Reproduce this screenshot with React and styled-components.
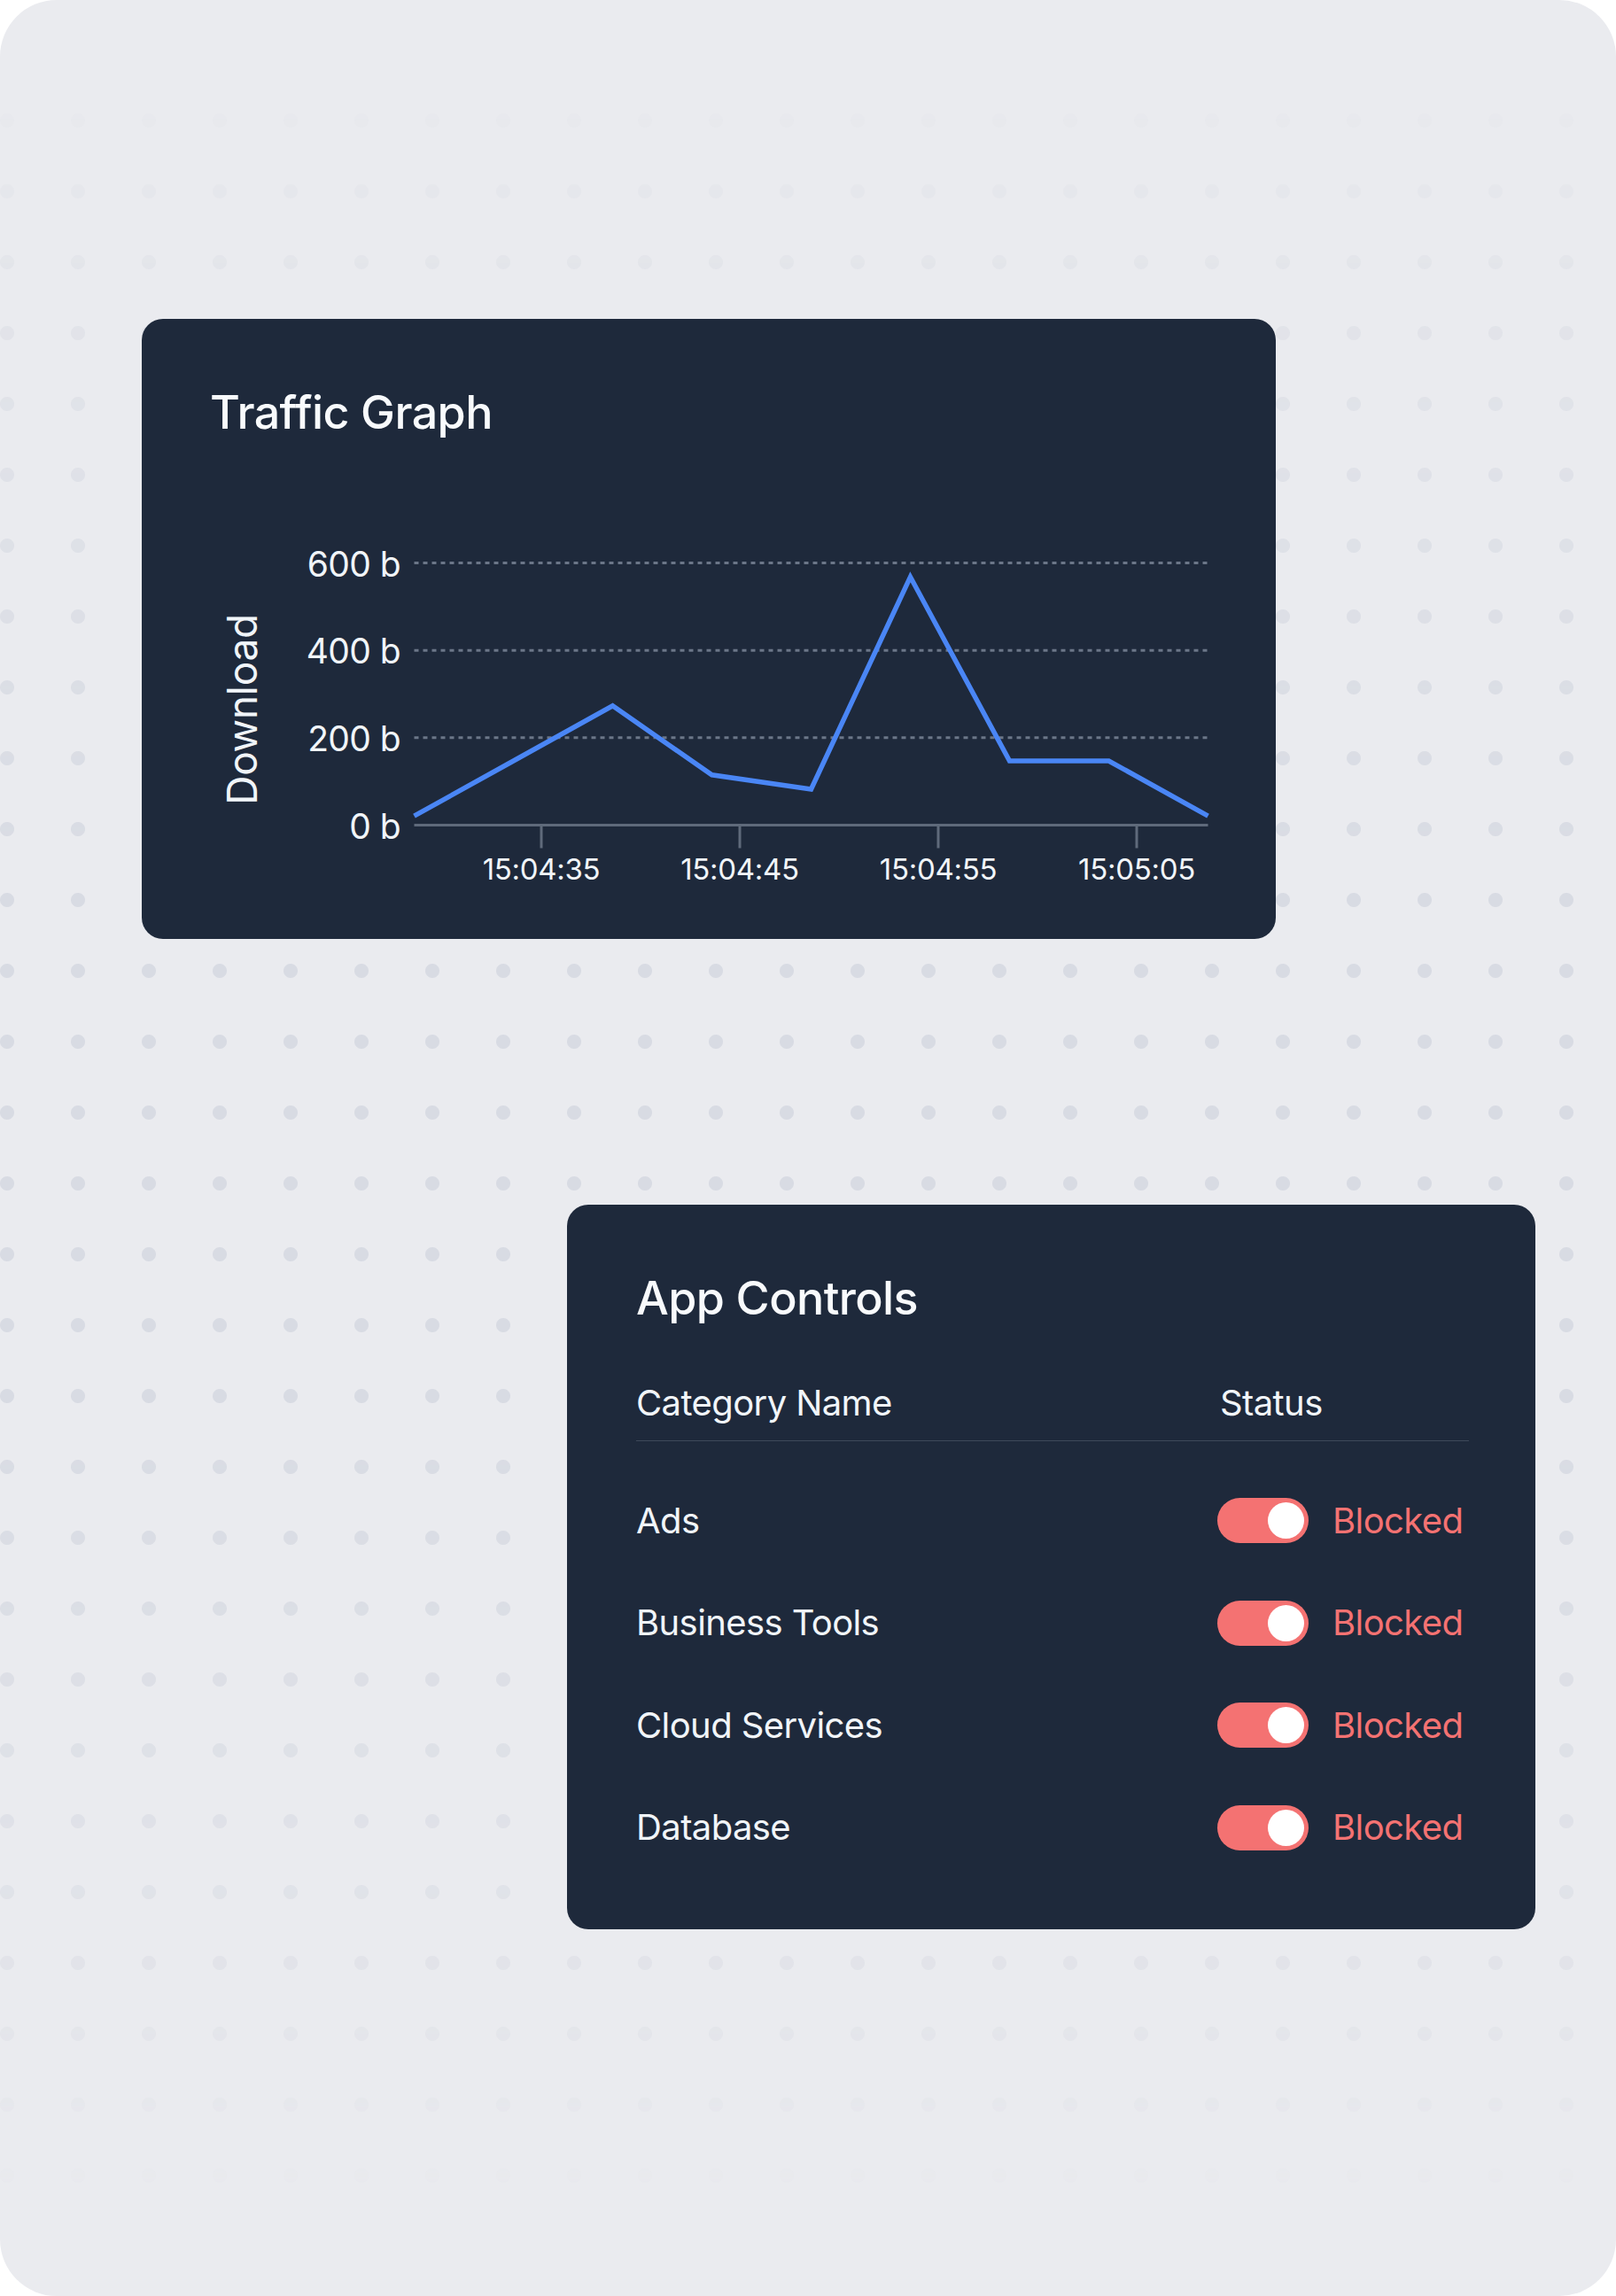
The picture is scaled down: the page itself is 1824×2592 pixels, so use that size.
import React from "react";
import styled, { createGlobalStyle } from "styled-components";

const GlobalStyle = createGlobalStyle`
  html, body {
    margin: 0;
    padding: 0;
    background: #ffffff;
  }
  body {
    font-family: Inter, "Noto Sans", sans-serif;
    -webkit-font-smoothing: antialiased;
  }
`;

const Panel = styled.div`
  position: relative;
  width: 1824px;
  height: 2592px;
  box-sizing: border-box;
  padding: 360px 0 0 160px;
  border-radius: 64px;
  background: #eaebef;
  overflow: hidden;
  display: flex;
  flex-direction: column;
  align-items: flex-start;

  &::before {
    content: "";
    position: absolute;
    inset: 0;
    background-image: radial-gradient(circle, #d8dbe3 7.5px, transparent 8.5px);
    background-size: 80px 80px;
    background-position: -32px 16px;
    -webkit-mask-image: linear-gradient(
      to bottom,
      transparent 3%,
      rgba(0, 0, 0, 0.45) 14%,
      #000 38%,
      #000 62%,
      rgba(0, 0, 0, 0.45) 86%,
      transparent 96%
    );
    mask-image: linear-gradient(
      to bottom,
      transparent 3%,
      rgba(0, 0, 0, 0.45) 14%,
      #000 38%,
      #000 62%,
      rgba(0, 0, 0, 0.45) 86%,
      transparent 96%
    );
  }
`;

const Card = styled.section`
  position: relative;
  box-sizing: border-box;
  width: ${p => p.$width}px;
  height: ${p => p.$height}px;
  margin: ${p => p.$margin || "0"};
  padding: ${p => p.$padding};
  background: #1e293b;
  border-radius: 24px;
  color: #f8fafc;
`;

const Title = styled.h2`
  margin: 0;
  font-size: 52px;
  line-height: 52px;
  font-weight: 500;
  letter-spacing: -0.6px;
  color: #f8fafc;
`;

const ChartSvg = styled.svg`
  display: block;
  margin-top: 108px;
  overflow: visible;

  text {
    font-family: Inter, "Noto Sans", sans-serif;
    fill: #f1f5f9;
  }
`;

const TableHead = styled.div`
  display: grid;
  grid-template-columns: 1fr 284px;
  margin-top: 72px;
  padding-bottom: 22px;
  border-bottom: 1.5px solid #3e495a;
  font-size: 40px;
  line-height: 40px;
  color: #f1f5f9;
  letter-spacing: -0.6px;
`;

const HeadCell = styled.div`
  padding-left: ${p => (p.$status ? "3px" : "0")};
`;

const Rows = styled.div`
  padding-top: 32px;
`;

const Row = styled.div`
  display: grid;
  grid-template-columns: 1fr 284px;
  align-items: center;
  height: 115.5px;
  font-size: 40px;
  line-height: 40px;
  color: #f1f5f9;
  letter-spacing: -0.6px;
`;

const StatusCell = styled.div`
  display: flex;
  align-items: center;
  gap: 27px;
`;

const Toggle = styled.span`
  box-sizing: border-box;
  display: flex;
  justify-content: ${p => (p.$on ? "flex-end" : "flex-start")};
  align-items: center;
  width: 103px;
  height: 51px;
  padding: 5px;
  border-radius: 26px;
  background: ${p => (p.$on ? "#f47272" : "#475569")};
`;

const Knob = styled.span`
  width: 41px;
  height: 41px;
  border-radius: 50%;
  background: #ffffff;
`;

const StatusText = styled.span`
  color: #f47272;
`;

// chart geometry (svg-local px)
const PLOT_LEFT = 230.5;
const PLOT_RIGHT = 1126.5;
const AXIS_Y = 331.5;
const PX_PER_BYTE = 296 / 600;
const STEP = 112;

const download = [21, 147, 273, 115, 82, 568, 147, 147, 21];
const yTicks = [600, 400, 200, 0];
const xTicks = [
  { x: 374, label: "15:04:35" },
  { x: 598, label: "15:04:45" },
  { x: 822, label: "15:04:55" },
  { x: 1046, label: "15:05:05" },
];

const yFor = v => AXIS_Y - v * PX_PER_BYTE;

function TrafficChart() {
  const line = download
    .map((v, i) => `${PLOT_LEFT + i * STEP},${yFor(v).toFixed(1)}`)
    .join(" ");

  return (
    <ChartSvg width="1140" height="410" viewBox="0 0 1140 410">
      <text
        transform="translate(53 201) rotate(-90)"
        textAnchor="middle"
        fontSize="46"
        letterSpacing="-0.3"
      >
        Download
      </text>

      {yTicks.map(v => (
        <g key={v}>
          <text x="215" y={yFor(v) + 15} textAnchor="end" fontSize="39" letterSpacing="-0.6">
            {v} b
          </text>
          {v > 0 && (
            <line
              x1={PLOT_LEFT}
              x2={PLOT_RIGHT}
              y1={yFor(v)}
              y2={yFor(v)}
              stroke="#6b7688"
              strokeWidth="3"
              strokeDasharray="5 5"
            />
          )}
        </g>
      ))}

      <line x1={PLOT_LEFT} x2={PLOT_RIGHT} y1={AXIS_Y} y2={AXIS_Y} stroke="#5f6a7b" strokeWidth="3" />

      {xTicks.map(t => (
        <g key={t.label}>
          <line x1={t.x} x2={t.x} y1={AXIS_Y} y2={AXIS_Y + 26} stroke="#5f6a7b" strokeWidth="3" />
          <text x={t.x} y="392.5" textAnchor="middle" fontSize="33" letterSpacing="-0.3">
            {t.label}
          </text>
        </g>
      ))}

      <polyline
        points={line}
        fill="none"
        stroke="#4a86f5"
        strokeWidth="5.5"
        strokeLinejoin="miter"
      />
    </ChartSvg>
  );
}

const categories = ["Ads", "Business Tools", "Cloud Services", "Database"];

function AppControls() {
  return (
    <Card $width={1093} $height={818} $margin="300px 0 0 480px" $padding="80px 75px 0 78px">
      <Title>App Controls</Title>
      <TableHead>
        <HeadCell>Category Name</HeadCell>
        <HeadCell $status>Status</HeadCell>
      </TableHead>
      <Rows>
        {categories.map(name => (
          <Row key={name}>
            <span>{name}</span>
            <StatusCell>
              <Toggle $on>
                <Knob />
              </Toggle>
              <StatusText>Blocked</StatusText>
            </StatusCell>
          </Row>
        ))}
      </Rows>
    </Card>
  );
}

export default function App() {
  return (
    <>
      <GlobalStyle />
      <Panel>
        <Card $width={1280} $height={700} $padding="80px 60px 0 77px">
          <Title>Traffic Graph</Title>
          <TrafficChart />
        </Card>
        <AppControls />
      </Panel>
    </>
  );
}
